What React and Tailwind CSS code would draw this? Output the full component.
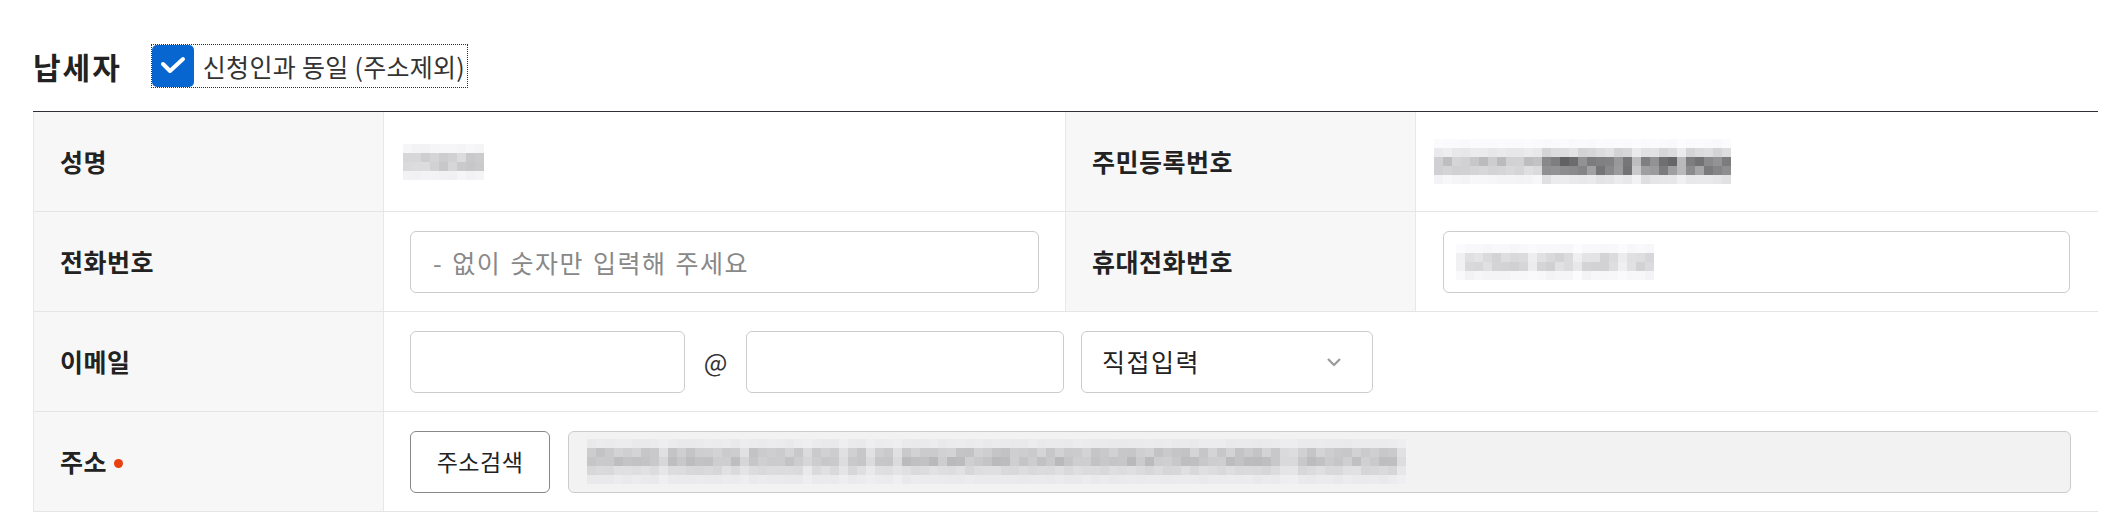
import React from 'react';

const CheckBox = () => (
    <svg width="42" height="42" viewBox="0 0 42 42" className="block shrink-0">
        <rect width="42" height="42" rx="5" fill="#0866d1" />
        <polyline points="11,19 18,26 31,14" fill="none" stroke="#fff" strokeWidth="4" strokeLinecap="round" strokeLinejoin="round" />
    </svg>
);

const Chevron = () => (
    <svg width="16" height="10" viewBox="0 0 16 10" className="block">
        <polyline points="2,2 8,8 14,2" fill="none" stroke="#9a9a9a" strokeWidth="2.2" />
    </svg>
);

// 개인정보 가림 처리 (모자이크)
const Mosaic = ({ cols, rows, seed = 1, bg = 255, split = 0, splitRows }) => {
    const rand = (i, j) => {
        const x = Math.sin(i * 12.9898 + j * 78.233 + seed * 37.719) * 43758.5453;
        return x - Math.floor(x);
    };
    return (
        <div className="flex flex-col select-none">
            {rows.map((d, j) => (
                <div key={j} className="flex">
                    {Array.from({ length: cols }).map((_, i) => {
                        const dark = split && i >= split ? splitRows[j] : d;
                        const gap = rand(i + 7, 3) < 0.07 ? 0.5 : 1;
                        const v = Math.round(bg - 255 * dark * gap * (0.75 + 0.5 * rand(i, j)));
                        const c = Math.max(90, Math.min(bg, v));
                        return <div key={i} className="w-[9px] h-[9px]" style={{ backgroundColor: `rgb(${c},${c},${c + 2})` }} />;
                    })}
                </div>
            ))}
        </div>
    );
};

const Label = ({ children, required }) => (
    <div className="flex items-center h-[99px] pl-[26px] bg-[#f7f7f7] border-x border-[#e8e8e8] text-[25px] tracking-[0.5px] font-bold text-[#222]">
        {children}
        {required && <span className="ml-[7px] mt-[3px] w-[9px] h-[9px] rounded-full bg-[#e8410f]" />}
    </div>
);

const Row = ({ children }) => (
    <div className="grid grid-cols-[351px_681px_351px_682px] border-b border-[#e5e5e5]">
        {children}
    </div>
);

const inputBox = "h-[62px] border border-[#cccccc] rounded-[6px] bg-white px-[22px] text-[25px] text-[#222] outline-none";

const App = () => {
    return (
        <div className="min-h-screen bg-white pl-[33px] pr-[16px] pt-[45px] font-['Noto_Sans_CJK_KR','Noto_Sans',sans-serif]">
            {/* 제목 + 체크박스 */}
            <div className="flex items-center h-[42px]">
                <h2 className="text-[30px] tracking-[2px] font-bold text-[#222] leading-none">납세자</h2>
                <label className="ml-[30px] flex items-center gap-[9px] h-[42px] pr-[2px] outline-1 outline-dotted outline-[#1515e8]">
                    <CheckBox />
                    <span className="text-[25px] tracking-[0.3px] text-[#333] leading-none">신청인과 동일 (주소제외)</span>
                </label>
            </div>

            {/* 입력 테이블 */}
            <div className="mt-[24px] border-t border-[#2e2e38]">
                <Row>
                    <Label>성명</Label>
                    <div className="flex items-center pl-[19px] pr-[26px]">
                        <Mosaic cols={9} rows={[0.04, 0.18, 0.18, 0.05]} seed={3} />
                    </div>
                    <Label>주민등록번호</Label>
                    <div className="flex items-center pl-[18px] pr-[28px]">
                        <Mosaic cols={33} rows={[0.02, 0.08, 0.22, 0.15, 0.04]} split={12} splitRows={[0.02, 0.14, 0.5, 0.45, 0.1]} seed={5} />
                    </div>
                </Row>
                <Row>
                    <Label>전화번호</Label>
                    <div className="flex items-center px-[26px]">
                        <input className={`${inputBox} w-full tracking-[1.5px] [word-spacing:2px] placeholder:text-[#888]`} placeholder="- 없이 숫자만 입력해 주세요" />
                    </div>
                    <Label>휴대전화번호</Label>
                    <div className="flex items-center pl-[27px] pr-[28px]">
                        <div className={`${inputBox} w-full flex items-center pl-[12px]`}>
                            <Mosaic cols={22} rows={[0.03, 0.14, 0.15, 0.04]} seed={9} />
                        </div>
                    </div>
                </Row>
                <Row>
                    <Label>이메일</Label>
                    <div className="col-span-3 flex items-center pl-[26px]">
                        <input className={`${inputBox} w-[275px]`} />
                        <span className="w-[61px] text-center text-[25px] text-[#333]">@</span>
                        <input className={`${inputBox} w-[318px]`} />
                        <button className={`${inputBox} ml-[17px] w-[292px] flex items-center justify-between pl-[20px] pr-[30px]`}>
                            <span className="tracking-[1.5px]">직접입력</span>
                            <Chevron />
                        </button>
                    </div>
                </Row>
                <Row>
                    <Label required>주소</Label>
                    <div className="col-span-3 flex items-center pl-[26px] pr-[27px]">
                        <button className="h-[62px] w-[140px] shrink-0 border border-[#888] rounded-[6px] bg-white text-[23px] tracking-[0.5px] text-[#222]">주소검색</button>
                        <div className="ml-[18px] flex-1 h-[62px] flex items-center border border-[#cccccc] rounded-[6px] bg-[#f2f2f2] pl-[18px]">
                            <Mosaic cols={91} rows={[0.03, 0.15, 0.18, 0.09, 0.03]} bg={242} seed={13} />
                        </div>
                    </div>
                </Row>
            </div>
        </div>
    );
};

export default App;
